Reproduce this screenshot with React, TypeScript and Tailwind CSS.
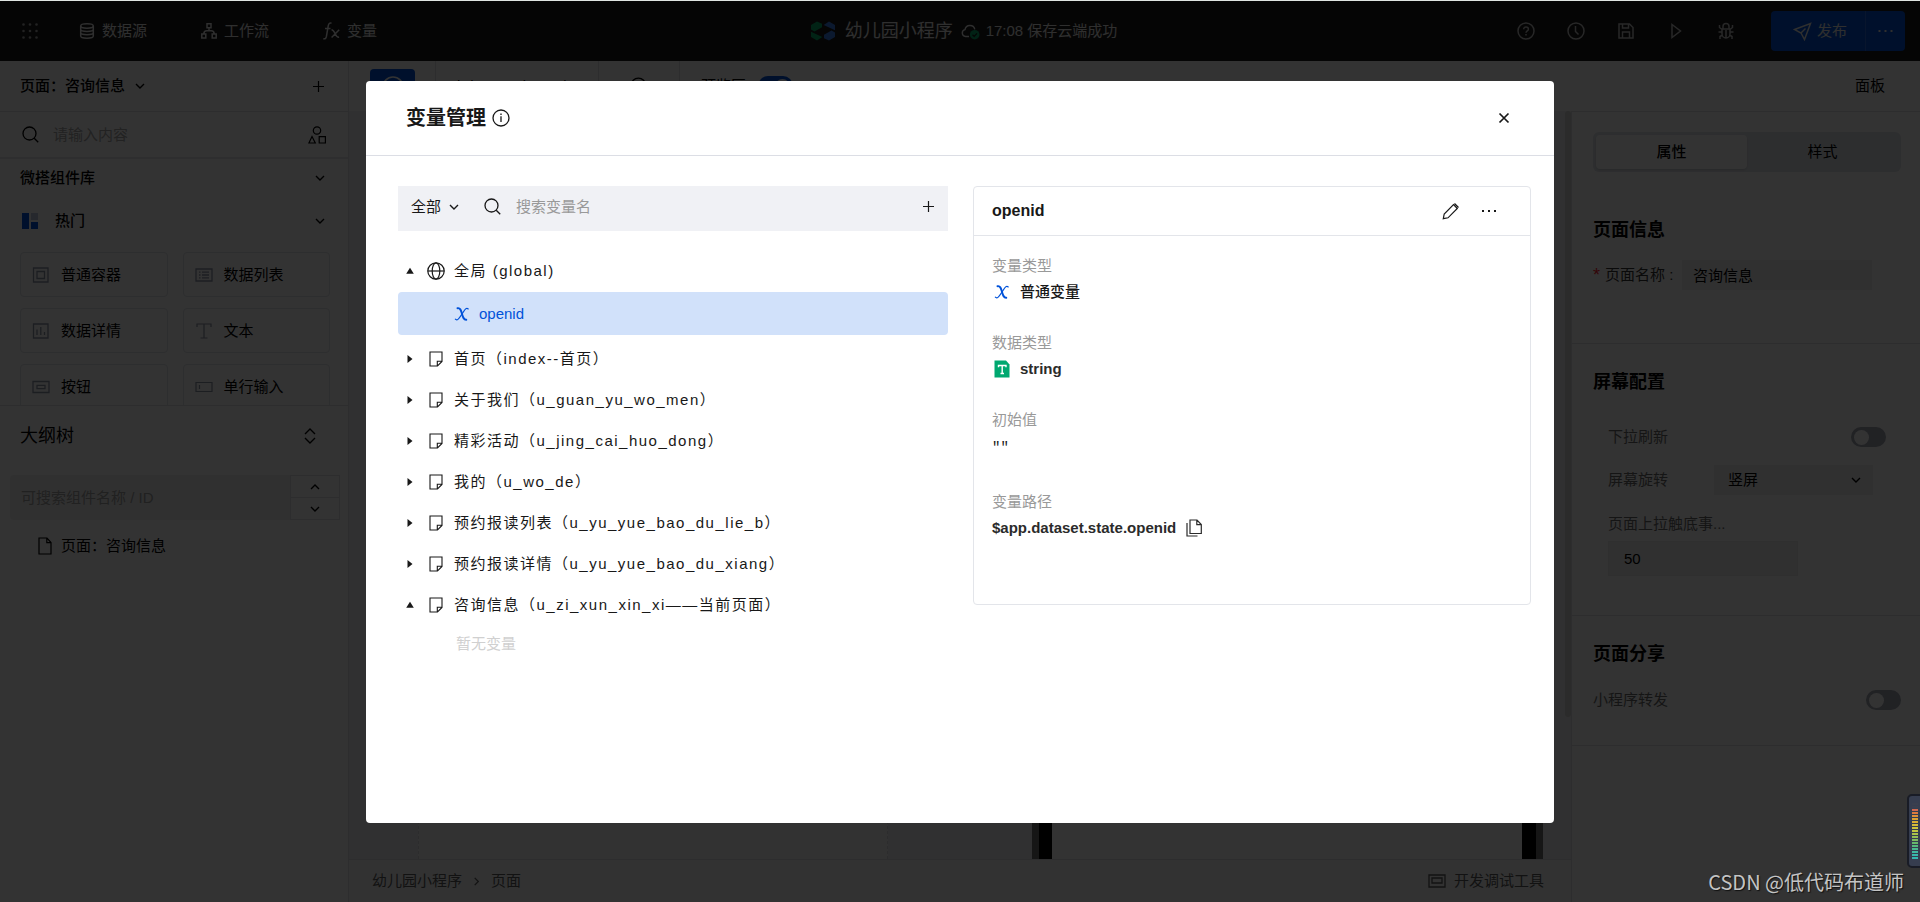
import React, { useState } from "react";

type IconProps = { className?: string };

function Svg({
  className = "",
  box = "0 0 16 16",
  width = 1.2,
  children,
}: {
  className?: string;
  box?: string;
  width?: number;
  children: React.ReactNode;
}) {
  return (
    <svg
      aria-hidden="true"
      viewBox={box}
      fill="none"
      stroke="currentColor"
      strokeWidth={width}
      className={`shrink-0 ${className}`}
    >
      {children}
    </svg>
  );
}

const ChevronDown = ({ className = "w-[10px] h-[10px]" }: IconProps) => (
  <Svg className={className} box="0 0 10 10" width={1.4}>
    <path d="M1 3l4 4 4-4" />
  </Svg>
);

const Plus = ({ className = "w-[13px] h-[13px]" }: IconProps) => (
  <Svg className={className} box="0 0 13 13" width={1.2}>
    <path d="M6.5 1v11M1 6.5h11" />
  </Svg>
);

const Search = ({ className = "w-[17px] h-[17px]" }: IconProps) => (
  <Svg className={className} box="0 0 17 17" width={1.3}>
    <circle cx="7.5" cy="7.5" r="6.5" />
    <path d="M12.2 12.2l4 4" />
  </Svg>
);

const DotsGrid = () => (
  <svg aria-hidden="true" viewBox="0 0 16 16" fill="currentColor" className="h-4 w-4 shrink-0">
    {[1.5, 8, 14.5].map((y) =>
      [1.5, 8, 14.5].map((x) => <circle key={`${x}-${y}`} cx={x} cy={y} r="1.3" />)
    )}
  </svg>
);

const Database = () => (
  <Svg className="h-4 w-4" width={1.5}>
    <ellipse cx="8" cy="3" rx="6.3" ry="2.2" />
    <path d="M1.7 3v10c0 1.2 2.8 2.2 6.3 2.2s6.3-1 6.3-2.2V3M1.7 6.3c0 1.2 2.8 2.2 6.3 2.2s6.3-1 6.3-2.2M1.7 9.6c0 1.2 2.8 2.2 6.3 2.2s6.3-1 6.3-2.2" />
  </Svg>
);

const Flow = () => (
  <Svg className="h-4 w-4" width={1.5}>
    <path d="M6 .8h4v4H6zM.8 11h4v4h-4zM11.2 11h4v4h-4zM8 4.8v3M2.8 11c0-2.200 1-3.200 3-3.200h4.400c2 0 3 1 3 3.200" />
  </Svg>
);

const Fx = () => (
  <Svg className="h-[18px] w-[17px]" box="0 0 17 18" width={1.5}>
    <path d="M8.500 1.200C6.500.6 5.600 1.800 5.200 4L3.400 14.500C3 16.500 2 17.200.3 16.700M2 6.600h5.500M8.500 7.700c2 0 2.400 1.500 3.600 4s1.800 4 4 3.600M16.200 7.800L8.600 15.600" />
  </Svg>
);

const Logo = () => (
  <svg aria-hidden="true" viewBox="0 0 24 20" className="h-5 w-6 shrink-0">
    <path d="M0 4L6 .5l5 2.300v3.400L3.500 10.500 0 8.500z" fill="#07b069" />
    <path d="M0 10.800L11.300 16 6 19.500 0 16z" fill="#07b069" />
    <path d="M12.700 4L18 .5 24 4v5.200z" fill="#3b7ee8" />
    <path d="M24 16l-6 3.500-5-2.300v-3.400l7.500-4.300 3.500 2z" fill="#3b7ee8" />
  </svg>
);

const CloudDone = () => (
  <svg aria-hidden="true" viewBox="0 0 19 17" className="h-[17px] w-[19px] shrink-0">
    <path
      d="M8 13.500H4.500A3.500 3.500 0 0 1 4 6.600 5 5 0 0 1 13.800 6.300"
      fill="none"
      stroke="currentColor"
      strokeWidth="1.4"
    />
    <circle cx="13.700" cy="11.700" r="4.800" fill="#07a868" />
    <path d="M11.500 11.700l1.700 1.700 2.800-3" fill="none" stroke="#1a1a1a" strokeWidth="1.300" />
  </svg>
);

const Help = () => (
  <Svg className="h-[18px] w-[18px]" box="0 0 18 18" width={1.5}>
    <circle cx="9" cy="9" r="8" />
    <path d="M6.700 7.200c0-3 4.700-2.800 4.700 0 0 1.700-2.400 1.600-2.400 3.500M9 12v1.500" />
  </Svg>
);
const Clock = () => (
  <Svg className="h-[18px] w-[18px]" box="0 0 18 18" width={1.5}>
    <circle cx="9" cy="9" r="8" />
    <path d="M8.500 4v5.500l3 3" />
  </Svg>
);
const Save = () => (
  <Svg className="h-[18px] w-[18px]" box="0 0 18 18" width={1.5}>
    <path d="M2 2h10.500L16 5.500V16H2zM5.500 2v4h6V2M5.500 16v-6h7v6" />
  </Svg>
);
const Play = () => (
  <Svg className="h-[18px] w-[18px]" box="0 0 18 18" width={1.5}>
    <path d="M5 2.500L13.500 9 5 15.500z" />
  </Svg>
);
const Bug = () => (
  <Svg className="h-[18px] w-[18px]" box="0 0 18 18" width={1.5}>
    <path d="M5 7h8v5a4 4 0 0 1-8 0zM6 7V4.500a3 3 0 0 1 6 0V7M9 8v8M5 10H1.500M13 10h3.500M5 7.500L2.500 5.500V3M13 7.500l2.500-2V3M5.500 13L3 14.500V17M12.500 13l2.500 1.500V17" />
  </Svg>
);
const Send = () => (
  <Svg className="h-[19px] w-[19px]" box="0 0 19 19" width={1.5}>
    <path d="M1.500 7.500L17.500 1.500 11.500 17.500 8 11zM8 11l4.500-4.500" />
  </Svg>
);
const More = ({ className = "h-1 w-4" }: IconProps) => (
  <svg aria-hidden="true" viewBox="0 0 16 4" fill="currentColor" className={`shrink-0 ${className}`}>
    <path d="M1 1h2v2H1zM7 1h2v2H7zM13 1h2v2h-2z" />
  </svg>
);
const Shapes = () => (
  <Svg className="h-[18px] w-[18px]" box="0 0 18 18" width={1.2}>
    <circle cx="9" cy="4.500" r="3.700" />
    <path d="M4 10.500l3.300 6.500H.9zM11.200 10.700h6.200V17h-6.200z" />
  </Svg>
);
const Hot = () => (
  <svg aria-hidden="true" viewBox="0 0 16 16" className="h-4 w-4 shrink-0">
    <path d="M0 0h7v16H0zM9 9h7v7H9z" fill="#0052d9" />
    <path d="M9 0h7v7H9z" fill="#bcc8de" />
  </svg>
);

const XMark = () => (
  <svg
    aria-hidden="true"
    viewBox="0 0 16 16"
    fill="none"
    stroke="#0052d9"
    strokeLinecap="round"
    className="h-4 w-4 shrink-0"
  >
    <path d="M3.500 2.200C6.500 1.600 7 4.500 8 8s1.700 6 4.300 5.800" strokeWidth="1.900" />
    <path d="M14.300 3C12 1 10.500 4.300 8 8S3.500 15.300 1.300 13.200" strokeWidth="1.100" />
  </svg>
);

const Globe = () => (
  <Svg className="h-[18px] w-[18px]" box="0 0 18 18" width={1.2}>
    <circle cx="9" cy="9" r="8.200" />
    <ellipse cx="9" cy="9" rx="3.800" ry="8.200" />
    <path d="M.8 9h16.400" />
  </Svg>
);

const PageIcon = () => (
  <Svg className="h-4 w-[14px]" box="0 0 14 16" width={1.1}>
    <path d="M1 1h12v9.500L8.500 15H1zM13 10.300H8.300V15" />
  </Svg>
);

const Caret = ({ open }: { open: boolean }) => (
  <svg aria-hidden="true" viewBox="0 0 8 8" fill="currentColor" className="h-2 w-2 shrink-0">
    {open ? <path d="M4 .8l3.800 6H.2z" /> : <path d="M1.500 0l5 4-5 4z" />}
  </svg>
);

const componentIcons: Record<string, React.ReactNode> = {
  box: (
    <Svg className="h-4 w-[18px]" box="0 0 18 16" width={1.3}>
      <path d="M1.500 1h14.500v14H1.500zM5 4.500h7.500v7H5z" />
    </Svg>
  ),
  list: (
    <Svg className="h-4 w-[18px]" box="0 0 18 16" width={1.3}>
      <path d="M1 2h16v12H1zM4 5.200h1.500M7 5.200h7M4 8h1.500M7 8h7M4 10.800h1.500M7 10.800h7" />
    </Svg>
  ),
  chart: (
    <Svg className="h-4 w-[18px]" box="0 0 18 16" width={1.3}>
      <path d="M1.500 1h14.500v14H1.500zM5 12V6.500M8.800 12V4M12.500 12V9" />
    </Svg>
  ),
  text: (
    <Svg className="h-4 w-[18px]" box="0 0 18 16" width={1.2}>
      <path d="M2 4V1h14v3M9 1v14M5.500 15h7" />
    </Svg>
  ),
  button: (
    <Svg className="h-4 w-[18px]" box="0 0 18 16" width={1.3}>
      <path d="M1 2.500h16v11H1zM5 6.300h8v3.400H5z" />
    </Svg>
  ),
  input: (
    <Svg className="h-4 w-[18px]" box="0 0 18 16" width={1.2}>
      <path d="M1 3.500h16v9H1zM4.500 6v4" />
    </Svg>
  ),
};

const components = [
  { name: "普通容器", icon: "box" },
  { name: "数据列表", icon: "list" },
  { name: "数据详情", icon: "chart" },
  { name: "文本", icon: "text" },
  { name: "按钮", icon: "button" },
  { name: "单行输入", icon: "input" },
];

const pages = [
  { label: "首页（index--首页）", open: false },
  { label: "关于我们（u_guan_yu_wo_men）", open: false },
  { label: "精彩活动（u_jing_cai_huo_dong）", open: false },
  { label: "我的（u_wo_de）", open: false },
  { label: "预约报读列表（u_yu_yue_bao_du_lie_b）", open: false },
  { label: "预约报读详情（u_yu_yue_bao_du_xiang）", open: false },
  { label: "咨询信息（u_zi_xun_xin_xi——当前页面）", open: true },
];

function Toggle({ id, label, on = false }: { id: string; label: string; on?: boolean }) {
  const [checked, setChecked] = useState(on);
  return (
    <input
      id={id}
      type="checkbox"
      role="switch"
      aria-label={label}
      checked={checked}
      onChange={(e) => setChecked(e.target.checked)}
      className="flex h-5 w-[35px] shrink-0 appearance-none items-center rounded-full bg-[#a4a8b4] px-[3px] before:block before:h-[15px] before:w-[15px] before:rounded-full before:bg-white before:content-[''] checked:justify-end checked:bg-[#0052d9]"
    />
  );
}

function Header() {
  return (
    <header className="grid h-[60px] shrink-0 grid-cols-[1fr_auto_1fr] items-center bg-[#1a1a1a] text-[#e8e8e8]">
      <nav className="flex items-center pl-[22px]">
        <button aria-label="应用菜单" className="mr-[41px] text-[#a8a8a8]">
          <DotsGrid />
        </button>
        <div className="flex items-center gap-[54px]">
          <button className="flex items-center gap-[7px]">
            <Database />
            数据源
          </button>
          <button className="flex items-center gap-[7px]">
            <Flow />
            工作流
          </button>
          <button className="flex items-center gap-[7px]">
            <Fx />
            变量
          </button>
        </div>
      </nav>
      <div className="flex items-center pl-2">
        <Logo />
        <h1 className="ml-[10px] mr-2 text-[18px]">幼儿园小程序</h1>
        <CloudDone />
        <span className="ml-[6px]">17:08 保存云端成功</span>
      </div>
      <div className="flex items-center justify-end pr-[15px]">
        <div className="mr-9 flex items-center gap-8 text-[#c4c4c4]">
          <button aria-label="帮助"><Help /></button>
          <button aria-label="历史"><Clock /></button>
          <button aria-label="保存"><Save /></button>
          <button aria-label="预览"><Play /></button>
          <button aria-label="调试"><Bug /></button>
        </div>
        <div className="flex h-10 overflow-hidden rounded bg-[#0052d9]">
          <button className="flex items-center gap-[5px] pl-[22px] pr-[18px]">
            <Send />
            发布
          </button>
          <button aria-label="更多发布选项" className="border-l border-[#2a6be0] px-[11px]">
            <More className="h-1 w-[17px]" />
          </button>
        </div>
      </div>
    </header>
  );
}

function LeftPanel() {
  return (
    <aside className="flex w-[349px] shrink-0 flex-col border-r border-[#e1e2e6] bg-white text-black">
      <div className="flex h-[51px] shrink-0 items-center justify-between border-b border-[#e1e2e6] pl-5 pr-[23px]">
        <button className="flex items-center gap-[10px] font-medium">
          页面：咨询信息
          <ChevronDown />
        </button>
        <button aria-label="新建页面"><Plus /></button>
      </div>
      <div className="flex h-[47px] shrink-0 items-center border-b-2 border-[#e6e7eb] pl-[22px] pr-[22px]">
        <Search />
        <input
          type="text"
          aria-label="搜索组件"
          placeholder="请输入内容"
          className="ml-[14px] min-w-0 flex-1 outline-none placeholder:text-[#a9a9a9]"
        />
        <button aria-label="组件分类"><Shapes /></button>
      </div>
      <button className="flex h-[38px] shrink-0 items-center justify-between pl-5 pr-[23px] font-medium">
        微搭组件库
        <ChevronDown />
      </button>
      <button className="flex h-12 shrink-0 items-center pl-[22px] pr-[23px] font-medium">
        <Hot />
        <span className="ml-[17px] mr-auto">热门</span>
        <ChevronDown />
      </button>
      <div className="h-[160px] shrink-0 overflow-hidden pl-5 pr-[18px] pt-[7px]">
        <div className="grid grid-cols-2 gap-x-[15px] gap-y-[11px]">
          {components.map((c) => (
            <button
              key={c.name}
              className="flex h-[45px] items-center gap-[11px] rounded border border-[#e1e3e8] pl-[11px]"
            >
              <span className="text-[#8d94a6]">{componentIcons[c.icon]}</span>
              {c.name}
            </button>
          ))}
        </div>
      </div>
      <div className="flex h-[61px] shrink-0 items-center justify-between border-t border-[#e1e2e6] pl-5 pr-8">
        <h2 className="text-[18px]">大纲树</h2>
        <button aria-label="展开大纲树">
          <Svg className="h-4 w-3" box="0 0 12 16" width={1.4}>
            <path d="M1 6l5-5 5 5M1 10l5 5 5-5" />
          </Svg>
        </button>
      </div>
      <div className="ml-[10px] mr-2 mt-[9px] flex h-[45px] shrink-0">
        <input
          type="text"
          aria-label="搜索组件名称"
          placeholder="可搜索组件名称 / ID"
          className="min-w-0 flex-1 rounded-l bg-[#f0f0f0] px-[11px] outline-none placeholder:text-[#a3a3a3]"
        />
        <div className="flex w-[50px] flex-col divide-y divide-[#e1e2e6] border border-[#e1e2e6]">
          <button aria-label="上一个" className="flex flex-1 items-center justify-center">
            <ChevronDown className="h-[10px] w-[10px] rotate-180" />
          </button>
          <button aria-label="下一个" className="flex flex-1 items-center justify-center">
            <ChevronDown />
          </button>
        </div>
      </div>
      <button className="mt-2 flex h-9 shrink-0 items-center gap-[9px] pl-[38px]">
        <Svg className="h-[18px] w-[14px]" box="0 0 14 18" width={1.2}>
          <path d="M1 1h8l4 4.500V17H1zM8.800 1v4.700H13" />
        </Svg>
        页面：咨询信息
      </button>
    </aside>
  );
}

function Canvas() {
  return (
    <main className="flex min-w-0 flex-1 flex-col bg-[#f0f0f2] text-black">
      <div className="flex h-[50px] shrink-0 items-stretch bg-white">
        <div className="flex items-start border-r border-[#e1e2e6] pl-[21px] pr-5 pt-2">
          <button
            aria-label="设计"
            className="flex h-[35px] w-[45px] items-center justify-center rounded bg-[#0052d9] text-white"
          >
            <Svg className="h-6 w-6" box="0 0 24 24" width={1.6}>
              <circle cx="12" cy="12" r="10" />
              <path d="M16 8l-6 2-2 6 6-2z" fill="currentColor" />
            </Svg>
          </button>
        </div>
        <button className="flex w-[163px] items-center border-r border-[#e1e2e6] pl-[21px]">
          iPhone 6 (100%)
        </button>
        <button
          aria-label="缩放"
          className="flex w-[81px] items-center justify-center border-r border-[#e1e2e6]"
        >
          <Search className="h-[19px] w-[19px]" />
        </button>
        <div className="flex items-center gap-3 pl-[21px]">
          <label htmlFor="preview">预览区</label>
          <Toggle id="preview" label="预览区" on />
        </div>
      </div>
      <div className="flex min-h-0 flex-1">
        <div className="ml-[69px] w-[470px] border-x border-dashed border-[#dcdce0] bg-[#fafafa]" />
        <div className="ml-auto flex w-[511px] justify-between bg-white">
          <div className="w-5 border-l-[7px] border-[#707070] bg-black" />
          <div className="w-[21px] border-r-[7px] border-[#707070] bg-black" />
        </div>
        <div className="ml-[22px] h-[81%] w-[6px] rounded-full bg-[#d4d4d6]" />
      </div>
      <footer className="flex h-[43px] shrink-0 items-center border-t border-[#dedfe3] bg-[#f7f7f7] pl-[23px] pr-[27px] text-[#5c5c5c]">
        <nav aria-label="路径" className="flex items-center gap-[10px]">
          <a href="#app">幼儿园小程序</a>
          <ChevronDown className="h-[9px] w-[9px] -rotate-90" />
          <a href="#page">页面</a>
        </nav>
        <button className="ml-auto flex items-center gap-2">
          <Svg className="h-[14px] w-[18px]" box="0 0 18 14" width={1.3}>
            <path d="M1 1h16v12H1zM4 4h10v5H4z" />
          </Svg>
          开发调试工具
        </button>
      </footer>
    </main>
  );
}

function RightPanel() {
  return (
    <aside className="flex w-[349px] shrink-0 flex-col bg-white text-black">
      <div className="flex h-[51px] shrink-0 items-center justify-end border-b border-[#e1e2e6] pr-[35px]">
        <button>面板</button>
      </div>
      <div className="flex flex-1 flex-col border-l border-[#e1e2e6]">
        <section className="border-b border-[#e1e2e6] pb-[53px] pl-[21px] pr-[19px] pt-5">
          <div role="tablist" className="flex h-10 rounded-md bg-[#e2e5eb] p-[3px]">
            <button role="tab" aria-selected="true" className="flex-1 rounded bg-white font-medium shadow-sm">
              属性
            </button>
            <button role="tab" aria-selected="false" className="flex-1">
              样式
            </button>
          </div>
          <h2 className="mt-[46px] text-[18px] font-bold">页面信息</h2>
          <div className="mt-[18px] flex h-[30px] items-center">
            <label htmlFor="page-name" className="flex w-[89px] shrink-0 gap-[5px] text-[#333]">
              <span className="text-[18px] text-[#ff2030]">*</span>页面名称 :
            </label>
            <input
              id="page-name"
              type="text"
              defaultValue="咨询信息"
              className="h-full w-[190px] min-w-0 bg-[#f0f0f0] px-[11px] pb-[2px] outline-none"
            />
          </div>
        </section>
        <section className="border-b border-[#e1e2e6] pb-[39px] pl-[21px] pr-[34px] pt-[26px]">
          <h2 className="text-[18px] font-bold">屏幕配置</h2>
          <div className="pl-[15px] text-[#6b6b6b]">
            <div className="mt-7 flex h-[30px] items-center justify-between">
              <label htmlFor="pull">下拉刷新</label>
              <Toggle id="pull" label="下拉刷新" />
            </div>
            <div className="mt-[13px] flex h-[30px] items-center justify-between pr-[13px]">
              <label htmlFor="rotate">屏幕旋转</label>
              <div className="relative h-full w-[159px] text-black">
                <select
                  id="rotate"
                  className="h-full w-full appearance-none bg-[#f0f0f0] px-[14px] outline-none"
                >
                  <option>竖屏</option>
                  <option>横屏</option>
                </select>
                <ChevronDown className="pointer-events-none absolute right-3 top-[10px] h-[10px] w-[10px]" />
              </div>
            </div>
            <label htmlFor="reach" className="mt-[17px] block">
              页面上拉触底事...
            </label>
            <input
              id="reach"
              type="text"
              defaultValue="50"
              className="mt-[5px] block h-[35px] w-[190px] border border-[#eaeaec] bg-[#f0f0f0] px-[15px] text-black outline-none"
            />
          </div>
        </section>
        <section className="border-b border-[#e1e2e6] pb-[30px] pl-[21px] pr-[19px] pt-[26px]">
          <h2 className="text-[18px] font-bold">页面分享</h2>
          <div className="mt-[19px] flex h-[30px] items-center justify-between text-[#6b6b6b]">
            <label htmlFor="share">小程序转发</label>
            <Toggle id="share" label="小程序转发" />
          </div>
        </section>
      </div>
    </aside>
  );
}

function VariableList() {
  return (
    <div>
      <div className="flex h-[45px] items-center bg-[#f0f1f5] pb-1 pl-[13px] pr-[13px]">
        <div className="relative flex items-center">
          <select aria-label="变量范围" className="w-12 appearance-none bg-transparent outline-none">
            <option>全部</option>
          </select>
          <ChevronDown className="pointer-events-none absolute right-0 h-[10px] w-[10px]" />
        </div>
        <Search className="ml-[25px] h-[17px] w-[17px]" />
        <input
          type="text"
          aria-label="搜索变量名"
          placeholder="搜索变量名"
          className="ml-[15px] min-w-0 flex-1 bg-transparent outline-none placeholder:text-[#999]"
        />
        <button aria-label="新建变量"><Plus /></button>
      </div>
      <ul className="mt-5">
        <li>
          <button className="flex h-10 w-full items-center pl-2 tracking-widest">
            <Caret open />
            <span className="ml-[13px] mr-[9px]">
              <Globe />
            </span>
            全局 (global)
          </button>
          <button className="mt-px flex h-[43px] w-full items-center gap-[9px] rounded bg-[#d1e1fa] pl-14 text-[#0052d9]">
            <XMark />
            openid
          </button>
        </li>
        <li className="h-1" aria-hidden="true" />
        {pages.map((p) => (
          <li key={p.label}>
            <button className="flex h-[41px] w-full items-center pb-px pl-2 tracking-widest">
              <Caret open={p.open} />
              <span className="ml-[15px] mr-[11px]">
                <PageIcon />
              </span>
              {p.label}
            </button>
            {p.open && <p className="flex h-9 items-center pl-[58px] text-[#d0d0d0]">暂无变量</p>}
          </li>
        ))}
      </ul>
    </div>
  );
}

function VariableDetail() {
  return (
    <section className="self-start rounded border border-[#e3e5ea]">
      <div className="flex h-[49px] items-center border-b border-[#e3e5ea] pl-[18px] pr-[33px]">
        <h3 className="mr-auto text-[16px] font-bold">openid</h3>
        <button aria-label="编辑">
          <Svg className="h-[18px] w-[18px]" box="0 0 18 18" width={1.2}>
            <path d="M1.300 16.700l.9-4.700L11.500 2.700l3.800 3.800L6 15.800zM12.500 1.500l4 4" />
          </Svg>
        </button>
        <button aria-label="更多" className="ml-[21px]">
          <More />
        </button>
      </div>
      <dl className="flex flex-col gap-[27px] px-[18px] pb-16 pt-[18px]">
        <div>
          <dt className="text-[#999]">变量类型</dt>
          <dd className="mt-[2px] flex items-center gap-[10px] pl-[2px] font-medium">
            <XMark />
            普通变量
          </dd>
        </div>
        <div>
          <dt className="text-[#999]">数据类型</dt>
          <dd className="mt-[2px] flex items-center gap-[10px] pl-[2px] font-bold text-[#2b2b2b]">
            <svg aria-hidden="true" viewBox="0 0 16 18" className="h-[18px] w-4 shrink-0">
              <path d="M.5.500h11.500l3.500 4v13H.5z" fill="#00a870" />
              <path
                d="M4.500 7.300V5.500h7.500v1.800M8.200 5.500v8M6.500 13.500h3.500"
                fill="none"
                stroke="#fff"
                strokeWidth="1.400"
              />
            </svg>
            string
          </dd>
        </div>
        <div>
          <dt className="text-[#999]">初始值</dt>
          <dd className="mt-[2px] h-[29px] font-['Liberation_Mono',monospace] text-[14px] leading-[28px]">""</dd>
        </div>
        <div>
          <dt className="text-[#999]">变量路径</dt>
          <dd className="mt-[2px] flex items-center gap-[10px] font-bold text-[#2b2b2b]">
            $app.dataset.state.openid
            <button aria-label="复制路径">
              <Svg className="h-[18px] w-4" box="0 0 16 18" width={1.2}>
                <path d="M4 1h7l4.300 4.500v9H4zM10.800 1v4.700h4.500M1 4v13h10.500" />
              </Svg>
            </button>
          </dd>
        </div>
      </dl>
    </section>
  );
}

function VariableDialog() {
  return (
    <div
      role="dialog"
      aria-modal="true"
      aria-labelledby="dialog-title"
      className="w-full max-w-[1188px] rounded bg-white text-[#181818]"
    >
      <div className="flex h-[75px] items-center border-b border-[#dcdee5] pl-10 pr-11">
        <h2 id="dialog-title" className="text-[20px] font-bold">
          变量管理
        </h2>
        <Svg className="ml-[6px] h-[18px] w-[18px]" box="0 0 18 18" width={1.3}>
          <circle cx="9" cy="9" r="8" />
          <path d="M9 7.200V13M9 4.500v1.500" />
        </Svg>
        <button aria-label="关闭" className="ml-auto">
          <Svg className="h-3 w-3" box="0 0 12 12" width={1.7}>
            <path d="M1.500 1.500l9 9M10.500 1.500l-9 9" />
          </Svg>
        </button>
      </div>
      <div className="grid grid-cols-[550fr_558fr] gap-[25px] pb-8 pl-8 pr-[23px] pt-[30px]">
        <VariableList />
        <VariableDetail />
      </div>
    </div>
  );
}

const meterColors = [
  "#3a3f4e", "#3a3f4e", "#d0684f", "#dd7a3f", "#e09038", "#dfa233", "#d9ae33",
  "#d6bb38", "#cfc53c", "#c0c640", "#a9c44a", "#93bf55", "#7fbc60", "#66b96c", "#55ba7c",
  "#4abb90", "#40baa0", "#38b9ac", "#34b8b0",
];

function Meter() {
  return (
    <svg aria-hidden="true" viewBox="0 0 13 74" className="absolute bottom-[34px] right-0 h-[74px] w-[13px]">
      <rect x="1" y="1" width="18" height="72" rx="4" fill="#363d4f" stroke="#191c26" strokeWidth="2" />
      {meterColors.map((c, i) => (
        <rect key={i} x="5" y={9 + i * 3} width="6" height="2" fill={c} />
      ))}
    </svg>
  );
}

export default function App() {
  return (
    <div className="relative flex h-screen flex-col overflow-hidden border-t border-[#dfe5e2] bg-white font-['Liberation_Sans','Noto_Sans_CJK_SC',sans-serif] text-[15px] leading-6">
      <Header />
      <div className="flex min-h-0 flex-1">
        <LeftPanel />
        <Canvas />
        <RightPanel />
      </div>
      <div className="absolute inset-0 flex justify-center bg-black/80 px-20 pb-[79px] pt-20">
        <VariableDialog />
      </div>
      <Meter />
      <p className="absolute bottom-2 right-4 font-['Noto_Sans_CJK_SC',sans-serif] text-[20px] text-[#c4c4c4] [text-shadow:1px_1px_1px_#111]">
        CSDN @低代码布道师
      </p>
    </div>
  );
}
